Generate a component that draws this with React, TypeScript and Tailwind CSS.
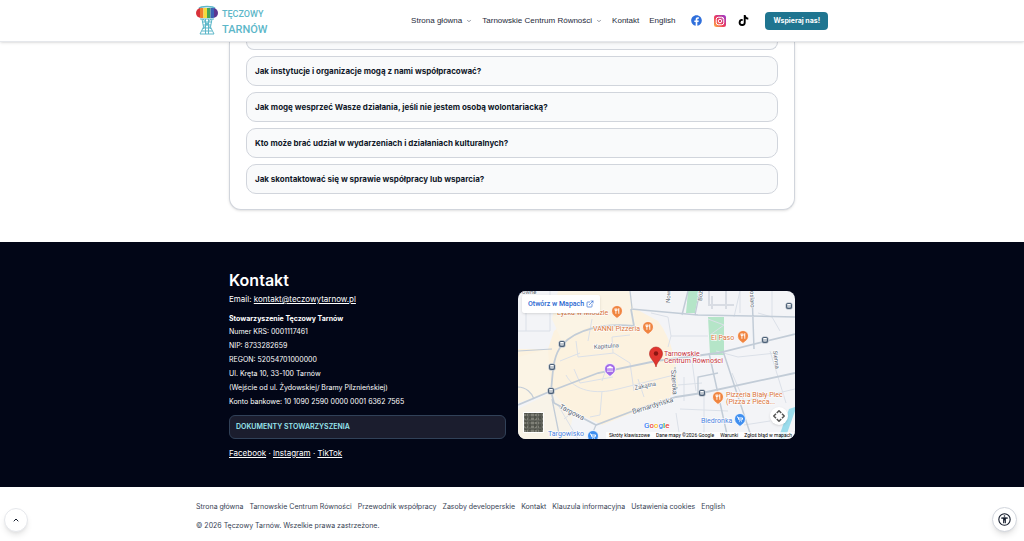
import React from "react";
import { FaFacebook, FaTiktok } from "react-icons/fa";
import { ChevronDown, ChevronUp, ExternalLink } from "lucide-react";

interface NavItem {
  title: string;
  href: string;
  dropdown?: boolean;
}

const navItems: Array<NavItem> = [
  { title: "Strona główna", href: "#", dropdown: true },
  { title: "Tarnowskie Centrum Równości", href: "#tcr", dropdown: true },
  { title: "Kontakt", href: "#kontakt" },
  { title: "English", href: "#en" },
];

const questions = [
  "Jak instytucje i organizacje mogą z nami współpracować?",
  "Jak mogę wesprzeć Wasze działania, jeśli nie jestem osobą wolontariacką?",
  "Kto może brać udział w wydarzeniach i działaniach kulturalnych?",
  "Jak skontaktować się w sprawie współpracy lub wsparcia?",
];

const details = [
  "Numer KRS: 0001117461",
  "NIP: 8733282659",
  "REGON: 52054701000000",
  "Ul. Kręta 10, 33-100 Tarnów",
  "(Wejście od ul. Żydowskiej/ Bramy Pilznieńskiej)",
  "Konto bankowe: 10 1090 2590 0000 0001 6362 7565",
];

const footerLinks = [
  "Strona główna",
  "Tarnowskie Centrum Równości",
  "Przewodnik współpracy",
  "Zasoby developerskie",
  "Kontakt",
  "Klauzula informacyjna",
  "Ustawienia cookies",
  "English",
];

const Logo = () => (
  <a href="#" aria-label="Tęczowy Tarnów" className="block">
    <svg viewBox="0 0 72 32" className="h-8 w-[72px]">
      <defs>
        <clipPath id="dome">
          <rect x="0" y="3" width="22" height="10" rx="5" />
        </clipPath>
      </defs>
      <path d="M3 3.500C5 .8 17 .8 19 3.500" fill="none" stroke="#5db7c9" strokeWidth="1.500" />
      <g clipPath="url(#dome)">
        <rect x="0" y="2" width="4" height="12" fill="#d8323a" />
        <rect x="4" y="2" width="3.500" height="12" fill="#ef7d2b" />
        <rect x="7.500" y="2" width="3.500" height="12" fill="#f4dc3c" />
        <rect x="11" y="2" width="3.500" height="12" fill="#46a556" />
        <rect x="14.500" y="2" width="3.500" height="12" fill="#3b62b5" />
        <rect x="18" y="2" width="4" height="12" fill="#5d3690" />
      </g>
      <path
        d="M4 14H18M6 14L7.500 22 4 29M9.500 14V29M12.500 14V29M16 14L14.500 22 18 29M6 17H16M7 20H15M7 23H15M6 26H16M4 29H18M7 14L15 24M15 14L7 24"
        fill="none"
        stroke="#5db7c9"
        strokeWidth="1"
      />
      <g fill="#5db7c9" fontFamily="Roboto, sans-serif">
        <text x="26" y="12" fontSize="9" fontWeight="500">TĘCZOWY</text>
        <text x="26" y="28" fontSize="11" fontWeight="500">TARNÓW</text>
      </g>
    </svg>
  </a>
);

const InstagramIcon = () => (
  <svg viewBox="0 0 24 24" className="size-3">
    <defs>
      <linearGradient id="insta" x1="0" y1="1" x2="1" y2="0">
        <stop offset="0" stopColor="#fdb643" />
        <stop offset="0.45" stopColor="#ee3b5b" />
        <stop offset="1" stopColor="#9438d4" />
      </linearGradient>
    </defs>
    <rect width="24" height="24" rx="5" fill="url(#insta)" />
    <rect x="4.500" y="4.500" width="15" height="15" rx="4" fill="none" stroke="#fff" strokeWidth="2" />
    <circle cx="12" cy="12" r="3.500" fill="none" stroke="#fff" strokeWidth="2" />
    <circle cx="16.500" cy="7.500" r="1.200" fill="#fff" />
  </svg>
);

const Header = () => (
  <header className="relative z-10 border-b border-gray-200 bg-white shadow-sm">
    <div className="mx-auto flex h-[41px] max-w-[632px] items-center justify-between">
      <Logo />
      <nav className="flex items-center font-['Liberation_Sans',sans-serif] text-[8px] leading-3 text-gray-800">
        <ul className="flex items-center gap-[10px]">
          {navItems.map((item) => (
            <li key={item.title} className="flex items-center gap-1">
              <a href={item.href}>{item.title}</a>
              {item.dropdown && (
                <ChevronDown className="size-[6px] text-gray-500" strokeWidth={3} aria-hidden="true" />
              )}
            </li>
          ))}
        </ul>
        <div className="ml-4 flex items-center gap-3">
          <a href="#facebook" aria-label="Facebook">
            <FaFacebook className="size-[11px] text-[#2f6fdb]" />
          </a>
          <a href="#instagram" aria-label="Instagram">
            <InstagramIcon />
          </a>
          <a href="#tiktok" aria-label="TikTok">
            <FaTiktok className="size-[11px] text-black" />
          </a>
        </div>
        <button className="ml-4 h-[18px] rounded bg-[#1f7590] px-2 font-[Inter,sans-serif] text-[7px] font-bold text-white">
          Wspieraj nas!
        </button>
      </nav>
    </div>
  </header>
);

const Faq = () => (
  <section className="mx-auto w-full max-w-[566px]">
    <div className="flex flex-col gap-[6px] rounded-b-xl border border-t-0 border-gray-300 bg-white px-4 pb-[15px] shadow-sm">
      <div className="h-2 rounded-b-xl border border-t-0 border-gray-300 bg-gray-50" />
      {questions.map((question) => (
        <button
          key={question}
          className="h-[30px] rounded-[10px] border border-gray-300 bg-gray-50 px-2 text-left text-[8px] leading-3 font-bold text-gray-900"
        >
          {question}
        </button>
      ))}
    </div>
  </section>
);

interface MarkerProps {
  x: number;
  y: number;
  color: string;
  icon?: "food" | "cart" | "museum";
}

const Marker: React.FC<MarkerProps> = ({ x, y, color, icon = "food" }) => (
  <g transform={`translate(${x} ${y})`}>
    <path
      d="M0 7.500C-2 5.500-5.500 4-5.500 0A5.500 5.500 0 0 1 5.500 0C5.500 4 2 5.500 0 7.500Z"
      fill={color}
      stroke="#fff"
      strokeWidth="0.800"
    />
    {icon === "food" && (
      <path d="M-2-2.500V-.5H-.2V-2.500M-1.100-2.500V2.800M1.800 2.800V-2.500C.8-2 .8 0 1.800.3" fill="none" stroke="#fff" strokeWidth="0.900" />
    )}
    {icon === "cart" && (
      <path d="M-3-2H-2L-1 1H2L2.600-1H-1.600M-.8 2.600H-.2M1.400 2.600H2" fill="none" stroke="#fff" strokeWidth="1" />
    )}
    {icon === "museum" && (
      <path d="M-3-1L0-3 3-1ZM-2-.5V2M0-.5V2M2-.5V2M-3 2.400H3" fill="#fff" stroke="#fff" strokeWidth="0.700" />
    )}
  </g>
);

const busStops = [
  [44, 53],
  [34, 76],
  [33, 100],
  [184, 102],
  [247, 49],
  [271, 15],
];

const MapDrawing = () => (
  <svg viewBox="0 0 277 148" preserveAspectRatio="xMidYMid slice" className="h-full w-full">
    <rect width="277" height="148" fill="#f3f4f7" />
    <path
      d="M36 40C55 25 80 22 118 18L140 30C155 50 158 72 160 96L150 108 84 134 50 118 33 100 0 112V58L30 58Z"
      fill="#fcf2df"
    />
    <path d="M40 0H112L118 36 70 36 44 50 34 28Z" fill="#fbf4e5" />
    <path d="M0 66L30 58 33 100 0 112Z" fill="#fbf4e5" />
    <path d="M0 118L34 101 55 125 50 148H0Z" fill="#f8f3e8" />
    <path d="M170 0H181L177 22H168ZM190 26H206V64H192Z" fill="#b5e5c8" />
    <path d="M267 148L277 120V116L271 118 260 148Z" fill="#9bdcec" />
    <g fill="none" stroke="#dbe0e8" strokeWidth="1">
      <path d="M0 40H32V0M8 20V40M58 50L60 66 96 62 112 72M74 28L70 50M95 62L94 46 112 44M56 78L62 92 95 86M48 84C56 100 78 104 100 98L156 84M112 72L116 100M90 72L84 90M62 62L42 70M84 100L82 124 72 126" />
      <path d="M133 22L150 26 153 45H190M153 45L150 56M190 28L206 34 192 44M222 0V22M240 22L254 26V0M254 26L262 40M166 86V110M174 70L178 100M186 104V148M198 60L220 66 258 62M252 60L268 112M214 82L226 110 277 98M222 0L216 26M160 94L184 92M162 118L210 120M46 128L56 120M40 114L60 148M226 134L252 130M120 88L126 106M158 122L162 148" />
    </g>
    <g fill="none" stroke="#c2ccd7" strokeWidth="1.800">
      <path d="M113 18L180 24 277 26M170 0L164 24M234 0L236 58" strokeWidth="1.500" />
      <path d="M112 0L114 17M182 0L177 24" strokeWidth="1.300" />
      <path d="M113 18L116 35C86 32 58 38 44 54C34 66 35 84 33 100" />
      <path d="M0 114L33 100 80 82 138 70 200 62 277 43" />
      <path d="M33 100L36 112 78 134 120 118 158 106 184 102 277 82" />
      <path d="M157 76L157 104M191 62L210 148M205 60L234 148" strokeWidth="1.500" />
      <path d="M34 108L42 148M78 134L72 148M180 102V86L200 82" strokeWidth="1.300" />
      <path d="M0 96C8 96 14 102 16 108M0 60L34 58" strokeWidth="1.200" />
    </g>
    <g fill="none" stroke="#d8dce3" strokeWidth="2">
      <path d="M191 0V14H216M194 5V18M208 0V18" />
    </g>

    {busStops.map(([x, y]) => (
      <g key={`${x}-${y}`}>
        <rect x={x - 3.5} y={y - 3.5} width="7" height="7" rx="2.500" fill="#4d6178" stroke="#fff" strokeWidth="0.500" />
        <rect x={x - 1.8} y={y - 2} width="3.600" height="3.400" rx="0.600" fill="#fff" />
        <path d={`M${x - 1.8} ${y}H${x + 1.8}`} stroke="#4d6178" strokeWidth="0.700" />
      </g>
    ))}

    <g fontFamily="Roboto, sans-serif" fontSize="7" stroke="#fff" strokeWidth="1.200" paintOrder="stroke">
      <g fill="#5a6674" fontSize="6">
        <text x="76" y="58" transform="rotate(-4 76 58)">Kapitulna</text>
        <text x="117" y="99" transform="rotate(-12 117 99)">Zakątna</text>
        <text x="115" y="123" fontSize="7" transform="rotate(-17 115 123)">Bernardyńska</text>
        <text x="41" y="117" fontSize="7" transform="rotate(28 41 117)">Targowa</text>
        <text x="153" y="79" fontSize="7" transform="rotate(86 153 79)">Szeroka</text>
        <text x="152" y="12" transform="rotate(-88 152 12)">Nowa</text>
        <text x="184" y="10" transform="rotate(-85 184 10)">Bóżnic</text>
        <text x="232" y="0" transform="rotate(88 232 0)">oslaro</text>
        <text x="255" y="60" transform="rotate(82 255 60)">Sienna</text>
        <text x="2" y="3">rowne</text>
      </g>
      <g fill="#d9743a">
        <text x="39" y="24">Łyżka w Miodzie</text>
        <text x="75" y="40">VANNI Pizzeria</text>
        <text x="193" y="49">El Paso</text>
        <text x="208" y="106">Pizzeria Biały Piec</text>
        <text x="208" y="113">(Pizza z Pieca...</text>
      </g>
      <g fill="#c5303b">
        <text x="146" y="65">Tarnowskie</text>
        <text x="146" y="72">Centrum Równości</text>
      </g>
      <g fill="#4a7fe0">
        <text x="183" y="132">Biedronka</text>
        <text x="30" y="145">Targowisko</text>
      </g>
    </g>

    <Marker x={99} y={20} color="#f08540" />
    <Marker x={130} y={36} color="#f08540" />
    <Marker x={225} y={45} color="#f08540" />
    <Marker x={200} y={106} color="#f08540" />
    <Marker x={92} y={78} color="#a26be8" icon="museum" />
    <Marker x={222} y={128} color="#3f8ff0" icon="cart" />
    <Marker x={75} y={145} color="#3f8ff0" icon="cart" />
    <path
      d="M138 76C137 70 131.500 68 131.500 62.500A6.500 6.500 0 0 1 144.500 62.500C144.500 68 139 70 138 76Z"
      fill="#e0352f"
      stroke="#b3211d"
      strokeWidth="0.600"
    />
    <circle cx="138" cy="62.500" r="2.200" fill="#8c1512" />

    <rect x="5" y="121" width="21" height="21" rx="1" fill="#fff" />
    <rect x="6" y="122" width="19" height="19" fill="#5f615a" />
    <path
      d="M6 124H25M6 128H25M6 132H25M6 136H25M6 140H25"
      stroke="#7f8077"
      strokeWidth="2"
      strokeDasharray="2 1 1 3 3 1"
    />
    <path
      d="M8 122V141M12 122V141M17 122V141M22 122V141"
      stroke="#4a4d45"
      strokeWidth="1.500"
      strokeDasharray="1 2 3 2"
    />

    <text x="126" y="137" fontFamily="Roboto, sans-serif" fontSize="8" fontWeight="500" stroke="#fff" strokeWidth="1" paintOrder="stroke">
      <tspan fill="#4285f4">G</tspan>
      <tspan fill="#ea4335">o</tspan>
      <tspan fill="#fbbc05">o</tspan>
      <tspan fill="#4285f4">g</tspan>
      <tspan fill="#34a853">l</tspan>
      <tspan fill="#ea4335">e</tspan>
    </text>
  </svg>
);

const KontaktMap = () => (
  <div className="relative h-[148px] overflow-hidden rounded-lg">
    <MapDrawing />
    <a
      href="#mapa"
      className="absolute top-1 left-1 flex h-[18px] items-center gap-[2px] rounded-xs bg-white px-[6px] font-[Roboto,sans-serif] text-[7px] leading-3 font-medium text-[#2a66d0] shadow-sm"
    >
      Otwórz w Mapach
      <ExternalLink className="size-2" aria-hidden="true" />
    </a>
    <button
      aria-label="Sterowanie kamerą mapy"
      className="absolute right-[7px] bottom-[14px] flex size-[18px] items-center justify-center rounded-full bg-white shadow-sm"
    >
      <svg viewBox="0 0 16 16" className="size-3" fill="none" stroke="#555" strokeWidth="2">
        <path d="M5 4L8 1 11 4M5 12L8 15 11 12M4 5L1 8 4 11M12 5L15 8 12 11" />
      </svg>
    </button>
    <div className="absolute right-0 bottom-0 flex gap-[6px] bg-white/70 px-[3px] font-[Roboto,sans-serif] text-[5px] leading-[7px] text-black">
      <button>Skróty klawiszowe</button>
      <span>Dane mapy ©2026 Google</span>
      <a href="#warunki">Warunki</a>
      <a href="#zglos">Zgłoś błąd w mapach</a>
    </div>
  </div>
);

const Kontakt = () => (
  <section id="kontakt" className="mt-8 bg-[#020617] py-7 text-[8px] leading-3 text-white">
    <div className="mx-auto grid max-w-[566px] grid-cols-2 items-center gap-3">
      <div>
        <h2 className="text-base leading-5 font-semibold">Kontakt</h2>
        <p className="mt-[3px]">
          Email:{" "}
          <a href="mailto:kontakt@teczowytarnow.pl" className="underline">
            kontakt@teczowytarnow.pl
          </a>
        </p>
        <p className="mt-2 text-[7px] font-bold">Stowarzyszenie Tęczowy Tarnów</p>
        <ul className="text-[7px] leading-[14px]">
          {details.map((line) => (
            <li key={line}>{line}</li>
          ))}
        </ul>
        <button className="mt-[6px] h-6 w-full rounded-md border border-slate-700 bg-[#1b1d2e] px-[6px] text-left text-[7px] font-semibold text-[#99e6ee]">
          DOKUMENTY STOWARZYSZENIA
        </button>
        <p className="mt-2">
          <a href="#facebook" className="underline">Facebook</a>
          {" · "}
          <a href="#instagram" className="underline">Instagram</a>
          {" · "}
          <a href="#tiktok" className="underline">TikTok</a>
        </p>
      </div>
      <KontaktMap />
    </div>
  </section>
);

const Footer = () => (
  <footer className="mx-auto max-w-[632px] pt-[14px] text-[7px] leading-3 text-gray-700">
    <ul className="flex flex-wrap gap-x-[6px]">
      {footerLinks.map((link) => (
        <li key={link}>
          <a href="#">{link}</a>
        </li>
      ))}
    </ul>
    <p className="mt-[7px]">© 2026 Tęczowy Tarnów. Wszelkie prawa zastrzeżone.</p>
  </footer>
);

const App = () => (
  <div className="min-h-screen bg-white font-[Inter,sans-serif]">
    <Header />
    <main>
      <Faq />
      <Kontakt />
    </main>
    <Footer />
    <button
      aria-label="Do góry"
      className="fixed bottom-[9px] left-1 flex size-6 items-center justify-center rounded-full border border-gray-200 bg-white text-gray-900 shadow-md"
    >
      <ChevronUp className="size-2" strokeWidth={3} />
    </button>
    <button
      aria-label="Ułatwienia dostępu"
      className="fixed right-[7px] bottom-[9px] flex size-[25px] items-center justify-center rounded-full border border-gray-300 bg-white text-gray-900 shadow-md"
    >
      <svg viewBox="0 0 24 24" className="size-[13px]" fill="none" stroke="currentColor" strokeWidth="2">
        <circle cx="12" cy="12" r="10.500" />
        <circle cx="12" cy="5.500" r="1.500" fill="currentColor" stroke="none" />
        <path d="M6 9.500L12 9 18 9.500M12 9V14M10.500 10V19M13.500 10V19" />
      </svg>
    </button>
  </div>
);

export default App;
